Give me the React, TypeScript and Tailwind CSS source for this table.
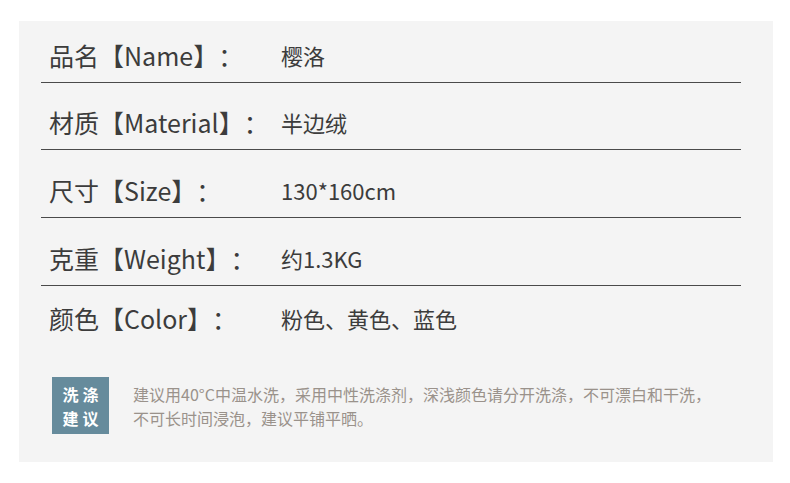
import React from 'react';

const rows: { label: string; value: string }[] = [
  { label: '品名【Name】：', value: '樱洛' },
  { label: '材质【Material】：', value: '半边绒' },
  { label: '尺寸【Size】：', value: '130*160cm' },
  { label: '克重【Weight】：', value: '约1.3KG' },
  { label: '颜色【Color】：', value: '粉色、黄色、蓝色' },
];

const font = { fontFamily: '"Noto Sans CJK SC", "Noto Sans", sans-serif' };

export default function App() {
  return (
    <div lang="zh-CN" className="w-[790px] h-[483px] bg-white pt-[21px] pl-[19px] [text-spacing-trim:space-all]" style={font}>
      <div className="w-[754px] h-[441px] bg-[#f4f4f4] pl-[22px] pt-[18px]">
        <div className="w-[700px]">
          {rows.map((r, i) => {
            const last = i === rows.length - 1;
            const cls = last
              ? 'pt-[16px]'
              : i === 0
                ? 'border-b border-[#4a4a4a] pb-[11px]'
                : i === 1
                  ? 'border-b border-[#4a4a4a] pt-[23px] pb-[11px]'
                  : 'border-b border-[#4a4a4a] pt-[24px] pb-[11px]';
            return (
              <div key={r.label} className={'flex items-center pl-[8px] ' + cls}>
                <div className="w-[232px] text-[25px] leading-[32px] text-[#3c3c3c] whitespace-nowrap">{r.label}</div>
                <div className="text-[22px] leading-[32px] text-[#3c3c3c] whitespace-nowrap">{r.value}</div>
              </div>
            );
          })}
        </div>

        <div className="flex items-center mt-[43px] pl-[11px]">
          <div className="w-[57px] h-[57px] bg-[#668b9c] flex flex-col items-center justify-center text-white text-[16px] leading-[24px] font-bold tracking-[4px] pl-[4px]">
            <span>洗涤</span>
            <span>建议</span>
          </div>
          <div className="ml-[24px] text-[16px] leading-[24px] text-[#9a928b]">
            <div>建议用40°C中温水洗，采用中性洗涤剂，深浅颜色请分开洗涤，不可漂白和干洗，</div>
            <div>不可长时间浸泡，建议平铺平晒。</div>
          </div>
        </div>
      </div>
    </div>
  );
}
